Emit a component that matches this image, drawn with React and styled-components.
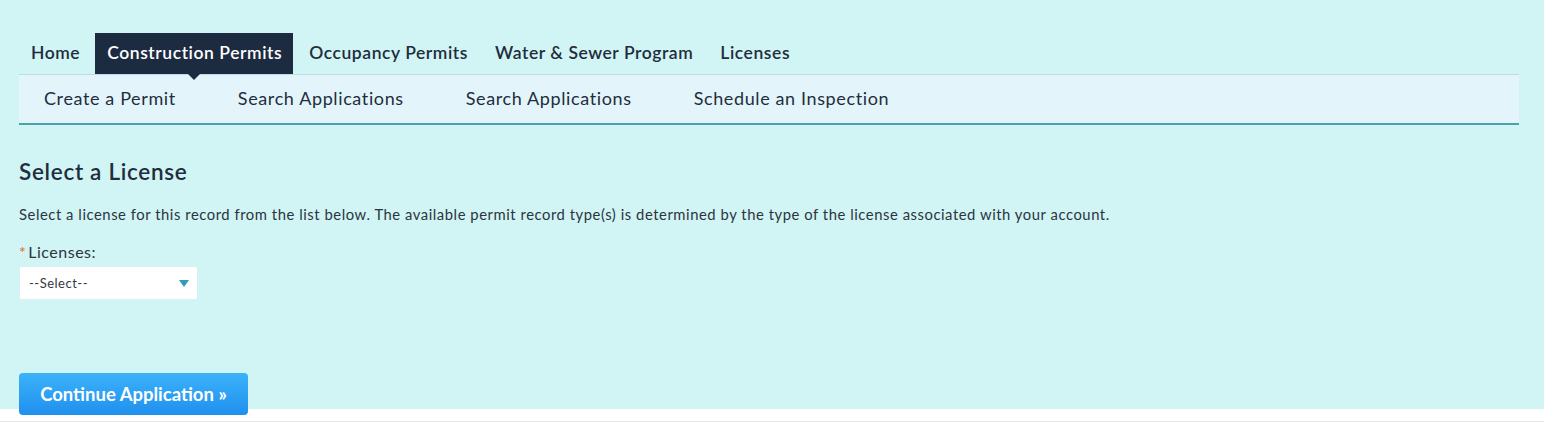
import styled, { createGlobalStyle } from "styled-components";

const GlobalStyle = createGlobalStyle`
  body {
    margin: 0;
    background: #ffffff;
    font-family: Lato, "Open Sans", sans-serif;
    color: #1f2d3d;
  }
`;

const Page = styled.div`
  background: #d1f4f5;
  padding: 33px 25px 0 19px;
  height: 376px;
`;

const Footer = styled.div`
  height: 12px;
  background: #ffffff;
  border-bottom: 1px solid #e6e6e6;
`;

const TopNav = styled.nav`
  display: flex;
  gap: 4px;
`;

const Tab = styled.a`
  position: relative;
  display: block;
  padding: 0 11px 0 12px;
  height: 41px;
  line-height: 40px;
  font-size: 17.5px;
  font-weight: 600;
  letter-spacing: 0.56px;
  color: ${({ $active }) => ($active ? "#ffffff" : "#1f2d3d")};
  background: ${({ $active }) => ($active ? "#1d2b40" : "transparent")};
  white-space: nowrap;

  ${({ $active }) =>
    $active &&
    `
    &::after {
      content: "";
      position: absolute;
      left: 50%;
      bottom: -6px;
      margin-left: -6px;
      border-left: 6px solid transparent;
      border-right: 6px solid transparent;
      border-top: 6px solid #1d2b40;
      z-index: 2;
    }
  `}
`;

const SubNav = styled.div`
  display: flex;
  gap: 62px;
  padding: 0 0 3px 25px;
  box-sizing: border-box;
  height: 51px;
  align-items: center;
  background: #e3f5fb;
  border-top: 1px solid #b7dfe3;
  border-bottom: 2px solid #4aa2ad;
`;

const SubLink = styled.a`
  font-size: 18px;
  letter-spacing: 0.62px;
  color: #1f2d3d;
  white-space: nowrap;
`;

const Heading = styled.h2`
  margin: 33px 0 0;
  font-size: 22.5px;
  font-weight: 600;
  letter-spacing: 0.7px;
  color: #1f2d3d;
`;

const Intro = styled.p`
  margin: 20px 0 0;
  font-size: 14.8px;
  letter-spacing: 0.55px;
  color: #2b3540;
`;

const Label = styled.div`
  margin-top: 19px;
  font-size: 16px;
  letter-spacing: 0.5px;
  color: #2b3540;

  span {
    color: #e06a1b;
    margin-right: 2px;
  }
`;

const SelectBox = styled.div`
  margin-top: 5px;
  width: 179px;
  height: 34px;
  box-sizing: border-box;
  display: flex;
  align-items: center;
  justify-content: space-between;
  padding: 0 8px 0 9px;
  background: #ffffff;
  border: 1px solid #d9eff0;
  border-radius: 2px;
  font-size: 13px;
  letter-spacing: 0.5px;
  color: #333a40;
`;

const Caret = styled.span`
  width: 0;
  height: 0;
  border-left: 5px solid transparent;
  border-right: 5px solid transparent;
  border-top: 7px solid #2b9dbd;
`;

const Button = styled.button`
  margin-top: 73px;
  width: 229px;
  height: 42px;
  border: none;
  border-radius: 4px;
  background: linear-gradient(#3cb2fa, #1f90ee);
  color: #ffffff;
  font-family: Lato, sans-serif;
  font-size: 18.5px;
  font-weight: 700;
  cursor: pointer;
`;

export default function App() {
  return (
    <>
      <GlobalStyle />
      <Page>
        <TopNav>
          <Tab>Home</Tab>
          <Tab $active>Construction Permits</Tab>
          <Tab>Occupancy Permits</Tab>
          <Tab>Water &amp; Sewer Program</Tab>
          <Tab>Licenses</Tab>
        </TopNav>
        <SubNav>
          <SubLink>Create a Permit</SubLink>
          <SubLink>Search Applications</SubLink>
          <SubLink>Search Applications</SubLink>
          <SubLink>Schedule an Inspection</SubLink>
        </SubNav>
        <Heading>Select a License</Heading>
        <Intro>
          Select a license for this record from the list below. The available permit record type(s) is
          determined by the type of the license associated with your account.
        </Intro>
        <Label>
          <span>*</span>Licenses:
        </Label>
        <SelectBox>
          --Select--
          <Caret />
        </SelectBox>
        <Button>Continue Application »</Button>
      </Page>
      <Footer />
    </>
  );
}
